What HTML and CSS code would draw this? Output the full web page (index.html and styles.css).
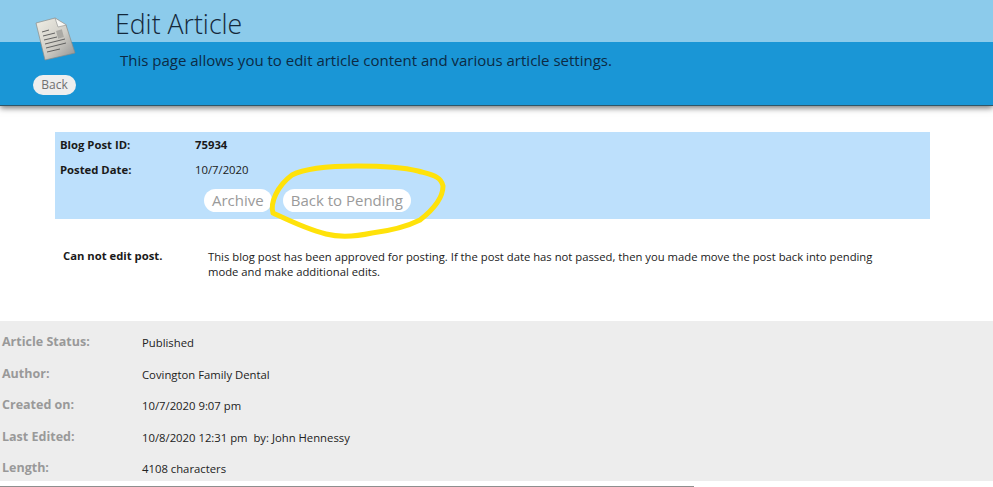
FILE: index.html
```html
<!DOCTYPE html>
<html lang="en">
<head>
<meta charset="utf-8">
<title>Edit Article</title>
<link rel="stylesheet" href="styles.css">
</head>
<body>
<header class="page-header">
  <div class="header-side">
    <svg class="doc-icon" viewBox="0 0 44 48" width="44" height="48" aria-hidden="true">
      <defs>
        <linearGradient id="paper" x1="0" y1="0" x2="1" y2="1">
          <stop offset="0" stop-color="#f1efe6"/>
          <stop offset="0.55" stop-color="#cfcdc6"/>
          <stop offset="1" stop-color="#8f8f8f"/>
        </linearGradient>
      </defs>
      <path d="M3 6 L22 1 L33 8 L42 36 L12 43 Z" fill="url(#paper)" stroke="#8b8b86" stroke-width="0.7"/>
      <path d="M22 1 L25 10 L33.5 8 Z" fill="#f7f7f4" stroke="#9a9a96" stroke-width="0.7"/>
      <path d="M9 15 L16 13 M10 19 L22 16 M11 23 L24 20 M12 27 L32 22 M13 31 L33 26 M14 35 L27 32" stroke="#555" stroke-width="0.9" fill="none"/>
      <rect x="24" y="13" width="6" height="8" fill="#aaa9a4" transform="rotate(-15 27 17)"/>
    </svg>
    <a class="back-btn" href="#">Back</a>
  </div>
  <div class="header-main">
    <h1 class="page-title">Edit Article</h1>
    <p class="page-desc">This page allows you to edit article content and various article settings.</p>
  </div>
</header>

<main>
  <section class="post-panel">
    <div class="post-row">
      <span class="post-label">Blog Post ID:</span>
      <strong class="post-id">75934</strong>
    </div>
    <div class="post-row">
      <span class="post-label">Posted Date:</span>
      <span class="post-value">10/7/2020</span>
    </div>
    <div class="post-actions">
      <a class="pill" href="#">Archive</a>
      <a class="pill" href="#">Back to Pending</a>
    </div>
  </section>

  <section class="notice">
    <strong class="notice-title">Can not edit post.</strong>
    <p class="notice-text">This blog post has been approved for posting. If the post date has not passed, then you made move the post back into pending mode and make additional edits.</p>
  </section>

  <section class="details">
    <div class="detail-row"><span class="detail-label">Article Status:</span><span class="detail-value">Published</span></div>
    <div class="detail-row"><span class="detail-label">Author:</span><span class="detail-value">Covington Family Dental</span></div>
    <div class="detail-row"><span class="detail-label">Created on:</span><span class="detail-value">10/7/2020 9:07 pm</span></div>
    <div class="detail-row"><span class="detail-label">Last Edited:</span><span class="detail-value">10/8/2020 12:31 pm&nbsp; by: John Hennessy</span></div>
    <div class="detail-row"><span class="detail-label">Length:</span><span class="detail-value">4108 characters</span></div>
  </section>
  <div class="bottom-rule"></div>
</main>

<svg class="scribble" viewBox="0 0 993 487" width="993" height="487" aria-hidden="true">
  <path d="M273 213 C270 203 277 186 292 175 C307 167 335 166 357 166 C380 166 402 167 418 171 C432 175 441 176 443 186 C443 197 434 209 420 220 C404 228 388 231 372 233 C358 236 342 238 326 234 C306 229 288 220 273 213 Z" fill="none" stroke="#ffe20a" stroke-width="5" stroke-linejoin="round"/>
</svg>
</body>
</html>
```
FILE: styles.css
```css
* { box-sizing: border-box; }
html, body { margin: 0; padding: 0; }
body {
  position: relative;
  width: 993px;
  height: 487px;
  overflow: hidden;
  background: #fff;
  font-family: "Open Sans", "Liberation Sans", sans-serif;
  color: #1a1a1a;
}
.page-header {
  display: flex;
  height: 106px;
  background: linear-gradient(#8ccbeb 0, #8ccbeb 42px, #1a96d6 42px, #1a96d6 105px, #2f5668 105px);
  box-shadow: 0 2px 6px rgba(0, 0, 0, 0.55);
  padding-left: 33px;
}
.header-side {
  width: 44px;
  display: flex;
  flex-direction: column;
  align-items: flex-start;
  padding-top: 17px;
}
.doc-icon { display: block; }
.back-btn {
  margin-top: 10px;
  width: 43px;
  height: 20px;
  border-radius: 10px;
  background: #eeeeee;
  color: #707070;
  font-size: 12px;
  font-weight: 400;
  line-height: 20px;
  text-align: center;
  text-decoration: none;
}
.header-main { margin-left: 38px; }
.page-title {
  margin: 6px 0 0;
  font-size: 26.7px;
  line-height: 36px;
  font-weight: 300;
  color: #14283a;
}
.page-desc {
  margin: 7px 0 0 5px;
  font-size: 15px;
  line-height: 22px;
  color: #0c2a44;
}
.post-panel {
  margin: 26px 63px 0 55px;
  height: 87px;
  background: #bde0fc;
  padding: 0 5px;
}
.post-row {
  display: flex;
  height: 25px;
  align-items: center;
  font-size: 11.3px;
}
.post-label { width: 135px; font-weight: 700; }
.post-id { font-weight: 700; }
.post-actions {
  display: flex;
  gap: 11px;
  margin: 7px 0 0 144px;
}
.pill {
  height: 23px;
  padding: 0 8px;
  border-radius: 12px;
  background: #fff;
  color: #9a9a9a;
  font-size: 15px;
  line-height: 23px;
  text-decoration: none;
}
.notice {
  display: flex;
  margin: 29px 110px 0 63px;
  height: 73px;
  font-size: 11.27px;
  line-height: 15px;
}
.notice-title { width: 145px; flex: none; font-weight: 700; }
.notice-text { margin: 0; padding-top: 1px; }
.details {
  height: 160px;
  background: #ededed;
  padding-left: 2px;
  padding-top: 5px;
}
.detail-row {
  display: flex;
  height: 31.5px;
  align-items: center;
}
.detail-label {
  width: 140px;
  color: #999;
  font-size: 12.5px;
  font-weight: 700;
}
.detail-value { font-size: 11.3px; color: #222; padding-top: 2px; }
.bottom-rule {
  width: 694px;
  height: 1px;
  margin-top: 5px;
  background: #8e8e8e;
}
.scribble {
  position: absolute;
  top: 0;
  left: 0;
  pointer-events: none;
}
```
